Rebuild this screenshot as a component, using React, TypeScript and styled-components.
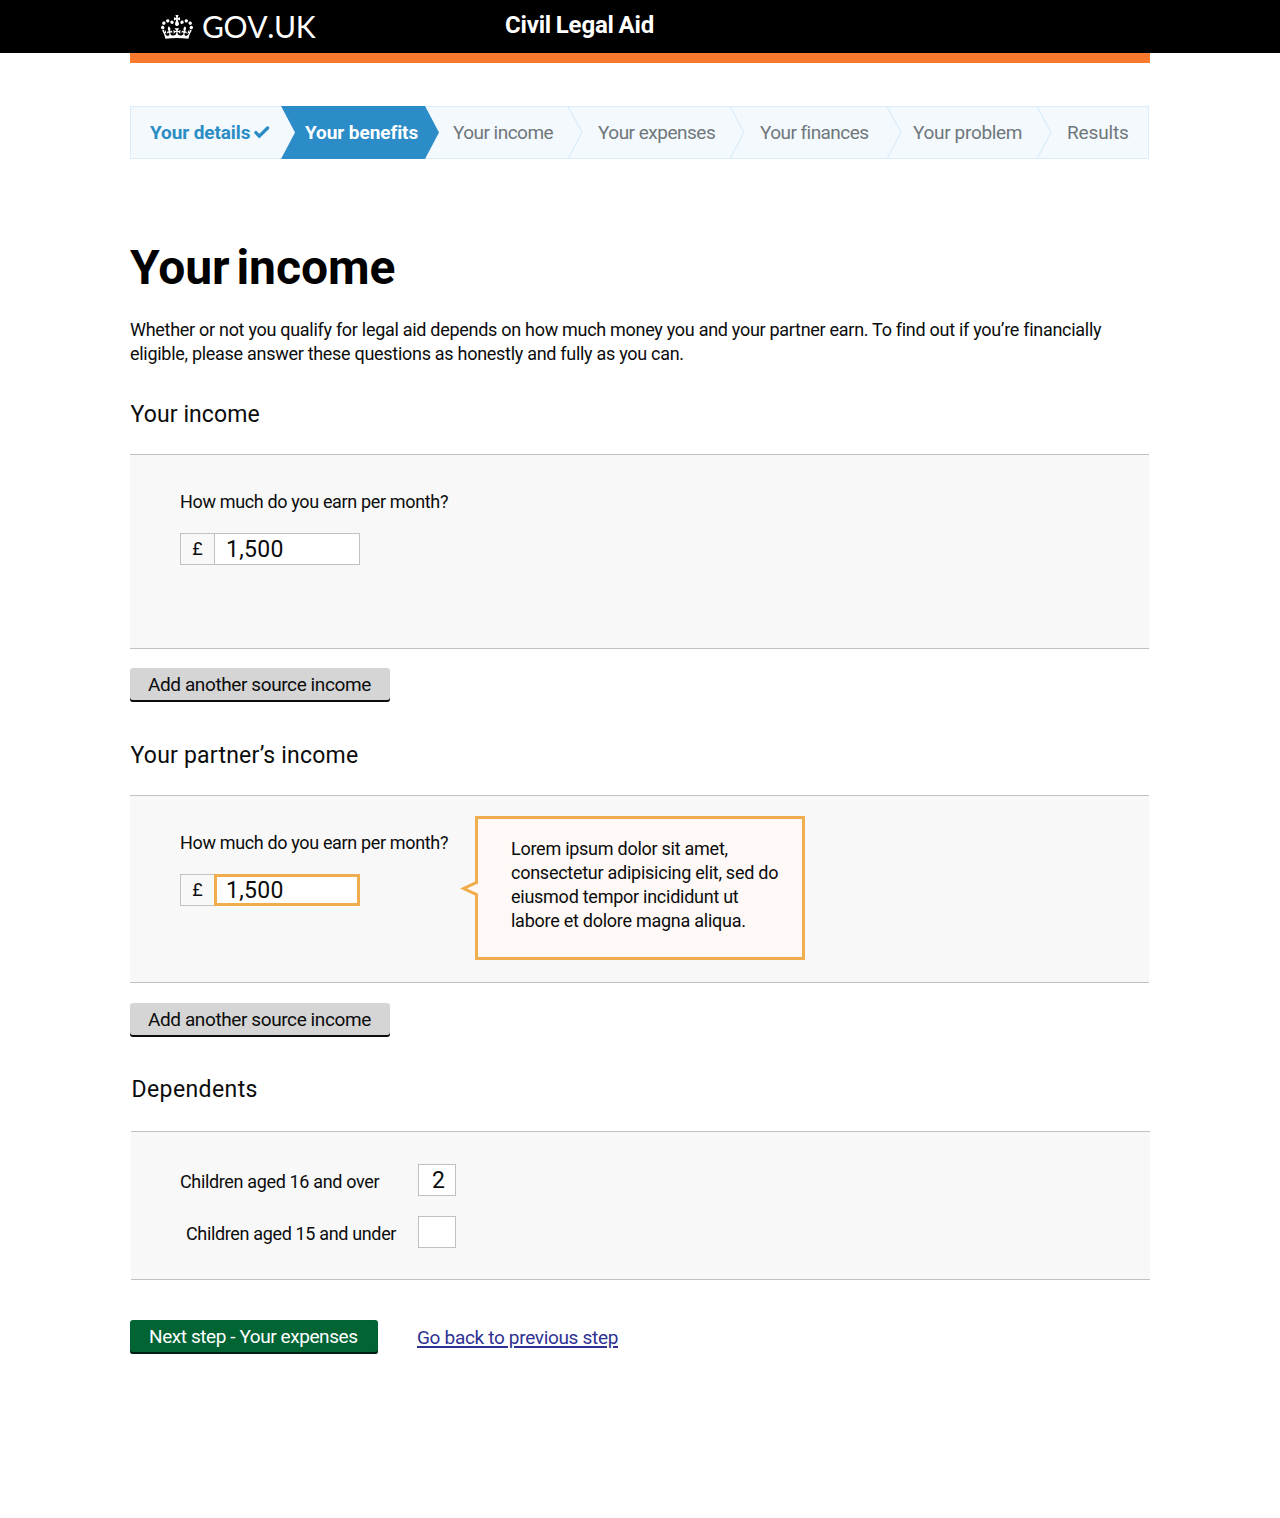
import React from "react";
import styled, { createGlobalStyle } from "styled-components";

const GlobalStyle = createGlobalStyle`
  *, *::before, *::after { box-sizing: border-box; }
  body {
    margin: 0;
    background: #fff;
    color: #0b0c0c;
    font-family: Roboto, "Open Sans", "Liberation Sans", sans-serif;
    font-variant-ligatures: none;
  }
  h1, h2, p { margin: 0; }
`;

const Page = styled.div`
  min-height: 1518px;
`;

const Container = styled.div`
  width: 1020px;
  margin: 0 auto;
`;

const HeaderBar = styled.header`
  height: 53px;
  background: #000;
  color: #fff;
`;

const HeaderInner = styled(Container)`
  height: 53px;
  display: flex;
  align-items: flex-start;
`;

const Brand = styled.a`
  width: 375px;
  padding: 8px 0 0 31px;
  display: flex;
  align-items: flex-start;
  color: #fff;
  text-decoration: none;
`;

const Crown = styled.svg`
  width: 32px;
  height: 24px;
  margin-top: 7px;
  fill: #fff;
`;

const Wordmark = styled.span`
  margin-left: 9px;
  font: 400 30px/36px Lato, sans-serif;
  font-kerning: none;
  letter-spacing: -0.35px;
`;

const ServiceName = styled.div`
  padding-top: 11px;
  font-size: 24px;
  line-height: 28px;
  font-weight: 700;
  letter-spacing: -0.18px;
  word-spacing: -1px;
`;

const Stripe = styled(Container)`
  height: 10px;
  background: #f7792e;
`;

const Steps = styled.nav`
  width: 1019px;
  height: 53px;
  margin-top: 43px;
  display: flex;
  background: #f4f9fe;
  box-shadow: inset 0 0 0 1px #dbedf8;
`;

type StepState = "done" | "current" | "todo";

const stepColour = { done: "#2b8cc4", current: "#fff", todo: "#6f777b" };

const StepItem = styled.div<{
  $width: number;
  $indent: number;
  $tracking: number;
  $state: StepState;
}>`
  position: relative;
  width: ${(p) => p.$width}px;
  padding: 1px 0 0 ${(p) => p.$indent}px;
  display: flex;
  white-space: nowrap;
  font-size: 19px;
  line-height: 51px;
  font-weight: ${(p) => (p.$state === "todo" ? 400 : 700)};
  letter-spacing: ${(p) => p.$tracking}px;
  color: ${(p) => stepColour[p.$state]};
  ${(p) =>
    p.$state === "current" &&
    `&::before {
      content: "";
      position: absolute;
      inset: 0 -14px 0 0;
      background: #2b8cc7;
      clip-path: polygon(0 0, calc(100% - 14px) 0, 100% 50%, calc(100% - 14px) 100%, 0 100%, 14px 50%);
    }`}
`;

const StepText = styled.span`
  position: relative;
`;

const Divider = styled.svg`
  position: absolute;
  top: 0;
  right: -14px;
  width: 15px;
  height: 53px;
  fill: none;
  stroke: #dbedf8;
  stroke-width: 1.3;
`;

const Tick = styled.svg`
  width: 17px;
  height: 14px;
  margin: 18px 0 0 3px;
  fill: none;
  stroke: #2b8cc4;
  stroke-width: 3.3;
  stroke-linecap: round;
`;

const Title = styled.h1`
  margin-top: 81px;
  font-size: 48px;
  line-height: 56px;
  font-weight: 700;
  letter-spacing: -0.05px;
  word-spacing: -5px;
  color: #000;
`;

const Intro = styled.p`
  margin-top: 22px;
  font-size: 18px;
  line-height: 24px;
  letter-spacing: -0.29px;
`;

const Section = styled.section<{ $top: number; $shift?: number }>`
  margin-top: ${(p) => p.$top}px;
  padding-left: ${(p) => p.$shift ?? 0}px;
`;

const SectionTitle = styled.h2<{ $tracking: number }>`
  padding-left: 0.5px;
  font-size: 23px;
  line-height: 30px;
  font-weight: 400;
  letter-spacing: ${(p) => p.$tracking}px;
`;

const Panel = styled.div<{ $height: number; $gap: number; $pad: number }>`
  position: relative;
  width: 1019px;
  height: ${(p) => p.$height}px;
  margin-top: ${(p) => p.$gap}px;
  padding-top: ${(p) => p.$pad}px;
  background: #f8f8f8;
  border: solid #bfc1c3;
  border-width: 1px 0;
`;

const Label = styled.label`
  display: block;
  font-size: 18px;
  line-height: 24px;
  letter-spacing: -0.35px;
`;

const MoneyField = styled.div`
  padding-left: 50px;
`;

const MoneyRow = styled.div`
  display: flex;
  margin-top: 19px;
`;

const Currency = styled.span`
  width: 34px;
  height: 32px;
  border: 1px solid #bfc1c3;
  border-right: 0;
  text-align: center;
  font-size: 18px;
  line-height: 29px;
`;

const TextInput = styled.input<{ $width: number; $indent: number; $focus?: boolean }>`
  width: ${(p) => p.$width}px;
  height: 32px;
  margin: 0;
  padding: 0 0 0 ${(p) => p.$indent - (p.$focus ? 3 : 1)}px;
  border: ${(p) => (p.$focus ? "3px solid #f0ad4e" : "1px solid #bfc1c3")};
  border-radius: 0;
  background: #fff;
  color: #0b0c0c;
  font: 400 23px Roboto, sans-serif;
  letter-spacing: 0.3px;
  outline: 0;
`;

const Button = styled.button<{ $primary?: boolean }>`
  display: flex;
  height: 34px;
  width: ${(p) => (p.$primary ? 248 : 260)}px;
  padding: 2px 0 0 ${(p) => (p.$primary ? 19 : 18)}px;
  border: 0;
  border-radius: 3px;
  background: ${(p) => (p.$primary ? "#006435" : "#d5d5d5")};
  box-shadow: inset 0 -2px 0 ${(p) => (p.$primary ? "#001f10" : "#0b0c0c")};
  color: ${(p) => (p.$primary ? "#fff" : "#0b0c0c")};
  font: 400 19px/29px Roboto, sans-serif;
  letter-spacing: ${(p) => (p.$primary ? -0.42 : -0.4)}px;
  white-space: nowrap;
`;

const AddRow = styled.div<{ $top: number }>`
  margin-top: ${(p) => p.$top}px;
`;

const Hint = styled.aside`
  position: absolute;
  top: 20px;
  left: 345px;
  width: 330px;
  height: 144px;
  padding: 18px 19px 0 33px;
  border: 3px solid #f0ad4e;
  background: #fef8f6;
  font-size: 18px;
  line-height: 24px;
  letter-spacing: -0.26px;
`;

const HintPointer = styled.svg`
  position: absolute;
  left: -18px;
  top: 60px;
  width: 18px;
  height: 19px;
`;

const CountRow = styled.div<{ $indent: number }>`
  display: flex;
  height: 32px;
  margin-bottom: 20px;
  padding-left: 49px;

  ${Label} {
    width: 238px;
    padding: 6px 0 0 ${(p) => p.$indent}px;
  }
`;

const Actions = styled.div`
  display: flex;
  margin-top: 40px;
`;

const BackLink = styled.a`
  margin: 3px 0 0 39px;
  color: #2e3191;
  font-size: 19px;
  line-height: 30px;
  letter-spacing: -0.32px;
  text-decoration: underline;
  text-decoration-thickness: 2px;
  text-underline-offset: 2px;
`;

const steps: {
  label: string;
  width: number;
  indent: number;
  tracking: number;
  state: StepState;
}[] = [
  { label: "Your details", width: 151, indent: 20, tracking: -0.1, state: "done" },
  { label: "Your benefits", width: 144, indent: 24, tracking: -0.07, state: "current" },
  { label: "Your income", width: 144, indent: 28, tracking: -0.53, state: "todo" },
  { label: "Your expenses", width: 162, indent: 29, tracking: -0.5, state: "todo" },
  { label: "Your finances", width: 157, indent: 29, tracking: -0.55, state: "todo" },
  { label: "Your problem", width: 150, indent: 25, tracking: -0.33, state: "todo" },
  { label: "Results", width: 111, indent: 29, tracking: -0.15, state: "todo" },
];

function IncomeField({ id, focus }: { id: string; focus?: boolean }) {
  return (
    <MoneyField>
      <Label htmlFor={id}>How much do you earn per month?</Label>
      <MoneyRow>
        <Currency>£</Currency>
        <TextInput id={id} $width={146} $indent={12} $focus={focus} defaultValue="1,500" />
      </MoneyRow>
    </MoneyField>
  );
}

export default function App() {
  return (
    <Page>
      <GlobalStyle />
      <HeaderBar>
        <HeaderInner>
          <Brand href="#">
            <Crown viewBox="0 0 132 97" preserveAspectRatio="none" aria-hidden="true">
              <path d="M25 30.2c3.5 1.5 7.7-.2 9.1-3.7 1.5-3.6-.2-7.8-3.9-9.2-3.6-1.4-7.6.3-9.1 3.9-1.4 3.5.3 7.5 3.9 9zM9 39.5c3.6 1.5 7.8-.2 9.2-3.7 1.5-3.6-.2-7.8-3.9-9.1-3.6-1.5-7.6.2-9.1 3.8-1.4 3.5.3 7.5 3.8 9zM4.4 57.2c3.5 1.5 7.7-.2 9.1-3.8 1.5-3.6-.2-7.7-3.9-9.1-3.5-1.5-7.6.3-9.1 3.8-1.4 3.5.3 7.6 3.9 9.1zm38.3-21.4c3.5 1.5 7.7-.2 9.1-3.8 1.5-3.6-.2-7.7-3.9-9.1-3.6-1.5-7.6.3-9.1 3.8-1.3 3.6.4 7.7 3.9 9.1zm64.4-5.6c-3.6 1.5-7.8-.2-9.1-3.7-1.5-3.6.2-7.8 3.8-9.2 3.6-1.4 7.7.3 9.2 3.9 1.3 3.5-.4 7.5-3.9 9zm15.9 9.3c-3.6 1.5-7.7-.2-9.1-3.7-1.5-3.6.2-7.8 3.7-9.1 3.6-1.5 7.7.2 9.2 3.8 1.5 3.5-.3 7.5-3.8 9zm4.7 17.7c-3.6 1.5-7.8-.2-9.2-3.8-1.5-3.6.2-7.7 3.9-9.1 3.6-1.5 7.7.3 9.2 3.8 1.3 3.5-.4 7.6-3.9 9.1zM89.3 35.8c-3.6 1.5-7.8-.2-9.2-3.8-1.4-3.6.2-7.7 3.9-9.1 3.6-1.5 7.7.3 9.2 3.8 1.4 3.6-.3 7.7-3.9 9.1zM69.7 17.7l8.9 4.7V9.3l-8.9 2.8c-.2-.3-.5-.6-.9-.9L72.4 0H59.6l3.5 11.2c-.3.3-.6.5-.9.9l-8.8-2.8v13.1l8.8-4.7c.3.3.6.7.9.9l-5 15.4v.1c-.2.8-.4 1.6-.4 2.4 0 4.1 3.1 7.5 7 8.1h.2c.3 0 .7.1 1 .1.4 0 .7 0 1-.1h.2c4-.6 7.1-4.1 7.1-8.1 0-.8-.1-1.7-.4-2.4V34l-5.1-15.4c.4-.2.7-.6 1-.9zM66 92.8c16.9 0 32.8 1.1 47.1 3.2 4-16.9 8.9-26.7 14-33.5l-9.6-3.4c1 4.9 1.1 7.2 0 10.2-1.5-1.4-3-4.3-4.2-8.7L108.6 76c2.8-2 5-3.2 7.5-3.3-4.4 9.4-10 11.9-13.6 11.2-4.3-.8-6.3-4.6-5.6-7.9 1-4.7 5.7-5.9 8-.5 4.3-8.7-3-11.4-7.6-8.8 7.1-7.2 7.9-13.5 2.1-21.1-8 6.1-8.1 12.3-4.5 20.8-4.7-5.4-12.1-2.5-9.5 6.2 3.4-5.2 7.9-2 7.2 3.1-.6 4.3-6.4 7.8-13.5 7.2-10.3-.9-10.9-8-11.2-13.8 2.5-.5 7.1 1.8 11 7.3L80.2 60c-4.1 4.4-8 5.3-12.3 5.4 1.4-4.4 8-11.6 8-11.6H55.5s6.4 7.2 7.9 11.6c-4.2-.1-8-1-12.3-5.4l1.4 16.4c3.9-5.5 8.5-7.7 10.9-7.3-.3 5.8-.9 12.8-11.1 13.8-7.2.6-12.9-2.9-13.5-7.2-.7-5 3.8-8.3 7.1-3.1 2.7-8.7-4.6-11.6-9.4-6.2 3.7-8.5 3.6-14.7-4.6-20.8-5.8 7.6-5 13.9 2.2 21.1-4.7-2.6-11.9.1-7.7 8.8 2.3-5.5 7.1-4.2 8.1.5.7 3.3-1.3 7.1-5.7 7.9-3.5.7-9-1.8-13.5-11.2 2.5.1 4.7 1.3 7.5 3.3l-4.7-15.4c-1.2 4.4-2.7 7.2-4.3 8.7-1.1-3-.9-5.3 0-10.2l-9.5 3.4c5 6.9 9.9 16.7 14 33.5 14.8-2.1 30.8-3.2 47.7-3.2z" />
            </Crown>
            <Wordmark>GOV.UK</Wordmark>
          </Brand>
          <ServiceName>Civil Legal Aid</ServiceName>
        </HeaderInner>
      </HeaderBar>
      <Stripe />

      <Container as="main">
        <Steps>
          {steps.map((s, i) => (
            <StepItem
              key={s.label}
              $width={s.width}
              $indent={s.indent}
              $tracking={s.tracking}
              $state={s.state}
            >
              <StepText>{s.label}</StepText>
              {s.state === "done" && (
                <Tick viewBox="0 0 17 14" aria-hidden="true">
                  <path d="M2.9 7.6L6.3 11.1L14.6 3" />
                </Tick>
              )}
              {s.state === "todo" && i < steps.length - 1 && (
                <Divider viewBox="0 0 15 53" aria-hidden="true">
                  <path d="M.4 1L14 26.5L.4 52" />
                </Divider>
              )}
            </StepItem>
          ))}
        </Steps>

        <Title>Your income</Title>
        <Intro>
          Whether or not you qualify for legal aid depends on how much money you and your partner
          earn. To find out if you’re financially eligible, please answer these questions as
          honestly and fully as you can.
        </Intro>

        <Section $top={34}>
          <SectionTitle $tracking={0.1}>Your income</SectionTitle>
          <Panel $height={195} $gap={24} $pad={35}>
            <IncomeField id="income" />
          </Panel>
          <AddRow $top={19}>
            <Button>Add another source income</Button>
          </AddRow>
        </Section>

        <Section $top={39}>
          <SectionTitle $tracking={0.22}>Your partner’s income</SectionTitle>
          <Panel $height={188} $gap={24} $pad={35}>
            <IncomeField id="partner-income" focus />
            <Hint>
              <HintPointer viewBox="0 0 18 19" aria-hidden="true">
                <path d="M18 2.5L0 9.5L18 16.5Z" fill="#fef8f6" />
                <path d="M18 1V4.5L7 9.5L18 14.5V18L15 16.6L0 9.5L15 2.4Z" fill="#f0ad4e" />
              </HintPointer>
              Lorem ipsum dolor sit amet, consectetur adipisicing elit, sed do eiusmod tempor
              incididunt ut labore et dolore magna aliqua.
            </Hint>
          </Panel>
          <AddRow $top={20}>
            <Button>Add another source income</Button>
          </AddRow>
        </Section>

        <Section $top={38} $shift={1}>
          <SectionTitle $tracking={0.4}>Dependents</SectionTitle>
          <Panel $height={149} $gap={26} $pad={32}>
            <CountRow $indent={0}>
              <Label htmlFor="over">Children aged 16 and over</Label>
              <TextInput id="over" $width={38} $indent={14} defaultValue="2" />
            </CountRow>
            <CountRow $indent={6}>
              <Label htmlFor="under">Children aged 15 and under</Label>
              <TextInput id="under" $width={38} $indent={14} defaultValue="" />
            </CountRow>
          </Panel>
        </Section>

        <Actions>
          <Button $primary>Next step - Your expenses</Button>
          <BackLink href="#">Go back to previous step</BackLink>
        </Actions>
      </Container>
    </Page>
  );
}
